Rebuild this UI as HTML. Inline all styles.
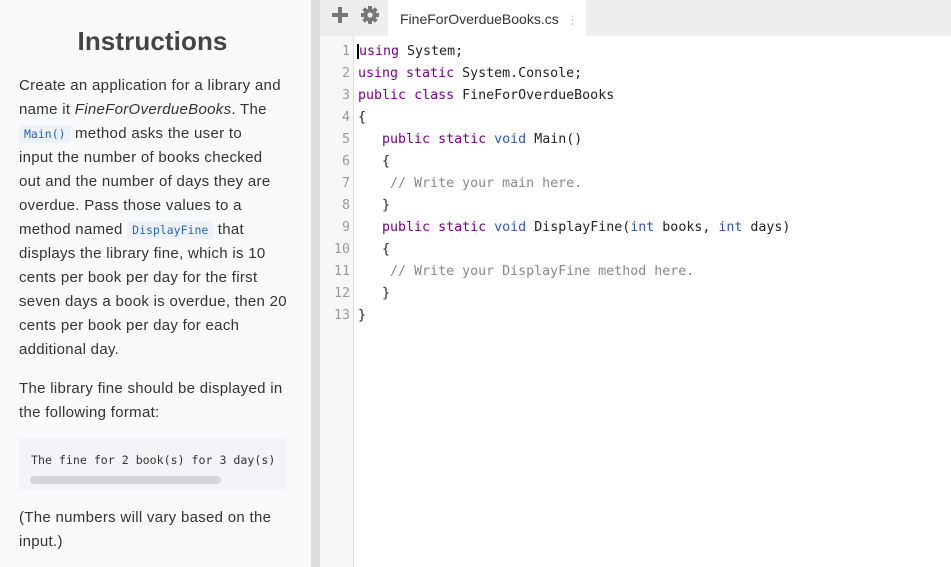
<!DOCTYPE html>
<html><head><meta charset="utf-8"><style>
*{margin:0;padding:0;box-sizing:border-box}
body{width:951px;height:567px;overflow:hidden;background:#fff;font-family:"Liberation Sans",sans-serif;position:relative}
#left{position:absolute;left:0;top:0;width:311px;height:567px;background:#f9fafb;color:#333}
#split{position:absolute;left:311px;top:0;width:9px;height:567px;background:#dcdcdc}
h1{position:absolute;left:0;width:305px;text-align:center;top:26px;font-size:26px;font-weight:bold;color:#444;letter-spacing:0.1px}
.p{position:absolute;left:19px;font-size:15px;line-height:24px;white-space:nowrap;color:#333;letter-spacing:0.3px}
code{font-family:"DejaVu Sans Mono",monospace;font-size:11.5px;color:#2a64b0;background:#eef2f7;padding:2px 5px;border-radius:2px;letter-spacing:0}
.pre{position:absolute;left:19px;top:438px;width:267px;height:52px;background:#f2f4f7}
.pre span{position:absolute;left:12px;top:15px;font-family:"DejaVu Sans Mono",monospace;font-size:11.6px;color:#333;white-space:nowrap}
.pre i{position:absolute;left:11px;top:38px;width:191px;height:8px;border-radius:4px;background:#d6d6d8}
#tabs{position:absolute;left:320px;top:0;width:631px;height:36px;background:#eeeeee}
#tab{position:absolute;left:388px;top:0;width:198px;height:36px;background:#fff;font-size:14px;color:#333;padding:11px 0 0 12px}
#gut{position:absolute;left:320px;top:36px;width:34px;height:531px;background:#f7f7f7;border-right:1px solid #ddd}
.code{position:absolute;top:41px;font-family:"DejaVu Sans Mono",monospace;font-size:13.3px;line-height:22px;white-space:pre}
#nums{left:320px;width:30px;text-align:right;color:#999}
#src{left:358px;color:#222}
.k{color:#770088}.t{color:#3355aa}.c{color:#888}
</style></head><body>
<div id="left">
<h1>Instructions</h1>
<div class="p" style="top:74px">Create an application for a library and<br>name it <i>FineForOverdueBooks</i>. The<br><code>Main()</code> method asks the user to<br>input the number of books checked<br>out and the number of days they are<br>overdue. Pass those values to a<br>method named <code>DisplayFine</code> that<br>displays the library fine, which is 10<br>cents per book per day for the first<br>seven days a book is overdue, then 20<br>cents per book per day for each<br>additional day.</div>
<div class="p" style="top:377px">The library fine should be displayed in<br>the following format:</div>
<div class="pre"><span>The fine for 2 book(s) for 3 day(s)</span><i></i></div>
<div class="p" style="top:506px">(The numbers will vary based on the<br>input.)</div>
</div>
<div id="split"></div>
<div id="tabs">
<svg style="position:absolute;left:11px;top:6px" width="18" height="18" viewBox="0 0 18 18"><path d="M7 1h4v6h6v4h-6v6H7v-6H1V7h6z" fill="#777"/></svg>
<svg style="position:absolute;left:40px;top:5px" width="20" height="20" viewBox="0 0 20 20"><g fill="#777"><circle cx="10" cy="10" r="6.5"/><rect x="8" y="1" width="4" height="18"/><rect x="1" y="8" width="18" height="4"/><rect x="8" y="1" width="4" height="18" transform="rotate(45 10 10)"/><rect x="8" y="1" width="4" height="18" transform="rotate(-45 10 10)"/></g><circle cx="10" cy="10" r="2.6" fill="#eee"/></svg>
</div>
<div id="tab" style="position:absolute">FineForOverdueBooks.cs <span style="color:#bbb;font-size:12px;margin-left:4px">&#8942;</span></div>
<div id="gut"></div>
<div class="code" id="nums">1
2
3
4
5
6
7
8
9
10
11
12
13</div>
<div class="code" id="src"><span style="border-left:2px solid #000;margin-left:-1px"></span><span class="k">using</span> System;
<span class="k">using</span> <span class="k">static</span> System.Console;
<span class="k">public</span> <span class="k">class</span> FineForOverdueBooks
{
   <span class="k">public</span> <span class="k">static</span> <span class="t">void</span> Main()
   {
    <span class="c">// Write your main here.</span>
   }
   <span class="k">public</span> <span class="k">static</span> <span class="t">void</span> DisplayFine(<span class="t">int</span> books, <span class="t">int</span> days)
   {
    <span class="c">// Write your DisplayFine method here.</span>
   }
}</div>
</body></html>
